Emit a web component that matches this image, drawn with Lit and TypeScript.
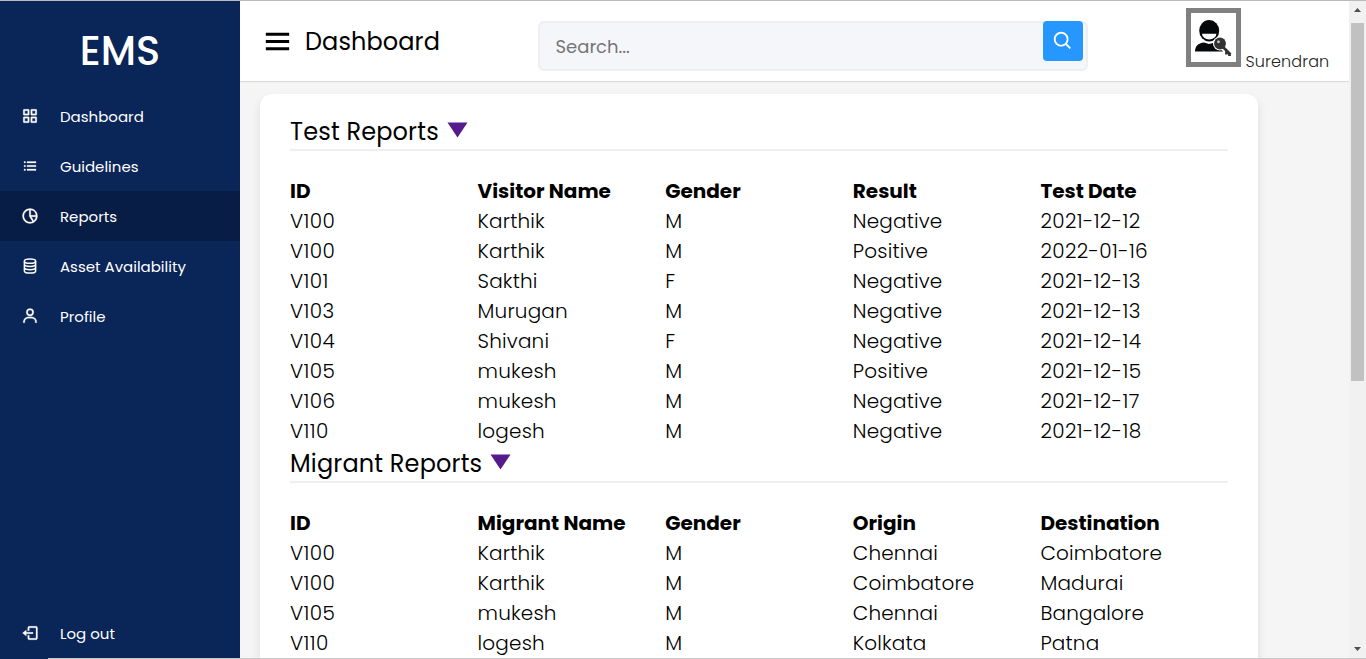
import { LitElement, html, css, svg } from "lit";
import { customElement } from "lit/decorators.js";

const ICONS = {
  grid: svg`<path fill-rule="evenodd" d="M10 3H4a1 1 0 0 0-1 1v6a1 1 0 0 0 1 1h6a1 1 0 0 0 1-1V4a1 1 0 0 0-1-1zM9 9H5V5h4zM20 3h-6a1 1 0 0 0-1 1v6a1 1 0 0 0 1 1h6a1 1 0 0 0 1-1V4a1 1 0 0 0-1-1zm-1 6h-4V5h4zM10 13H4a1 1 0 0 0-1 1v6a1 1 0 0 0 1 1h6a1 1 0 0 0 1-1v-6a1 1 0 0 0-1-1zm-1 6H5v-4h4zM20 13h-6a1 1 0 0 0-1 1v6a1 1 0 0 0 1 1h6a1 1 0 0 0 1-1v-6a1 1 0 0 0-1-1zm-1 6h-4v-4h4z"/>`,
  list: svg`<path d="M4 6h2v2H4zm0 5h2v2H4zm0 5h2v2H4zM8 6h12v2H8zm0 5h12v2H8zm0 5h12v2H8z"/>`,
  pie: svg`<path d="M12 2C6.486 2 2 6.486 2 12s4.486 10 10 10 10-4.486 10-10S17.514 2 12 2zm7.931 9H13V4.069A8.008 8.008 0 0 1 19.931 11zM4 12c0-4.072 3.061-7.436 7-7.931V12a.996.996 0 0 0 .111.438c.015.03.022.063.041.093l4.202 6.723A7.949 7.949 0 0 1 12 20c-4.411 0-8-3.589-8-8zm13.052 6.196L13.805 13h6.126a7.992 7.992 0 0 1-2.879 5.196z"/>`,
  coins: svg`<g fill="none" stroke="currentColor" stroke-width="2"><ellipse cx="12" cy="5.500" rx="7.500" ry="2.800"/><path d="M4.500 5.500v13c0 1.600 3.200 2.800 7.500 2.800s7.500-1.200 7.500-2.800v-13M4.500 9.800c0 1.600 3.200 2.800 7.500 2.800s7.500-1.200 7.500-2.800M4.500 14.100c0 1.600 3.200 2.800 7.500 2.800s7.500-1.200 7.500-2.800"/></g>`,
  user: svg`<path d="M12 2a5 5 0 1 0 5 5 5 5 0 0 0-5-5zm0 8a3 3 0 1 1 3-3 3 3 0 0 1-3 3zm9 11v-1a7 7 0 0 0-7-7h-4a7 7 0 0 0-7 7v1h2v-1a5 5 0 0 1 5-5h4a5 5 0 0 1 5 5v1z"/>`,
  logout: svg`<path d="m2 12 5 4v-3h9v-2H7V8z"/><path d="M20 3h-9c-1.103 0-2 .897-2 2v4h2V5h9v14h-9v-4H9v4c0 1.103.897 2 2 2h9c1.103 0 2-.897 2-2V5c0-1.103-.897-2-2-2z"/>`,
  search: svg`<path d="M10 18a7.952 7.952 0 0 0 4.897-1.688l4.396 4.396 1.414-1.414-4.396-4.396A7.952 7.952 0 0 0 18 10c0-4.411-3.589-8-8-8s-8 3.589-8 8 3.589 8 8 8zm0-14c3.309 0 6 2.691 6 6s-2.691 6-6 6-6-2.691-6-6 2.691-6 6-6z"/>`,
  menu: svg`<path d="M4 6h16v2H4zm0 5h16v2H4zm0 5h16v2H4z"/>`,
};

const icon = (name: keyof typeof ICONS, cls = "icon") =>
  html`<svg class=${cls} viewBox="0 0 24 24" fill="currentColor">${ICONS[name]}</svg>`;

const NAV: [keyof typeof ICONS, string][] = [
  ["grid", "Dashboard"],
  ["list", "Guidelines"],
  ["pie", "Reports"],
  ["coins", "Asset Availability"],
  ["user", "Profile"],
];

const REPORTS = [
  {
    title: "Test Reports",
    head: ["ID", "Visitor Name", "Gender", "Result", "Test Date"],
    rows: [
      ["V100", "Karthik", "M", "Negative", "2021-12-12"],
      ["V100", "Karthik", "M", "Positive", "2022-01-16"],
      ["V101", "Sakthi", "F", "Negative", "2021-12-13"],
      ["V103", "Murugan", "M", "Negative", "2021-12-13"],
      ["V104", "Shivani", "F", "Negative", "2021-12-14"],
      ["V105", "mukesh", "M", "Positive", "2021-12-15"],
      ["V106", "mukesh", "M", "Negative", "2021-12-17"],
      ["V110", "logesh", "M", "Negative", "2021-12-18"],
    ],
  },
  {
    title: "Migrant Reports",
    head: ["ID", "Migrant Name", "Gender", "Origin", "Destination"],
    rows: [
      ["V100", "Karthik", "M", "Chennai", "Coimbatore"],
      ["V100", "Karthik", "M", "Coimbatore", "Madurai"],
      ["V105", "mukesh", "M", "Chennai", "Bangalore"],
      ["V110", "logesh", "M", "Kolkata", "Patna"],
    ],
  },
];

const cell = (text: string) =>
  html`<div class=${/^V?\d/.test(text) ? "num" : "word"}>${text}</div>`;

@customElement("app-root")
class AppRoot extends LitElement {
  static styles = css`
    * { box-sizing: border-box; }
    :host {
      box-sizing: border-box;
      display: flex; flex-direction: column; width: 1366px; height: 659px; overflow: hidden;
      font-family: Poppins, Inter, sans-serif; color: #000; white-space: nowrap;
      border-top: 1px solid #bababa;
    }
    svg { display: block; flex: none; }
    .frame { display: flex; flex: 1; min-height: 0; }
    .edge { flex: none; height: 1px; background: linear-gradient(90deg, #0a2558 48px, #c8c8c8 48px); }
    .side { width: 240px; flex: none; background: #0a2558; color: #fff; display: flex; flex-direction: column; }
    .brand { height: 90px; padding-top: 10px; display: flex; align-items: center; justify-content: center; font-size: 40px; font-weight: 500; line-height: 80px; }
    .nav { display: flex; align-items: center; height: 50px; font-size: 15px; line-height: 48px; flex: none; }
    .nav span { padding-top: 2px; }
    .nav .icon { width: 18px; height: 18px; margin: 0 21px; stroke: currentColor; stroke-width: .35; }
    .nav.on { background: #081d45; }
    .push { flex: 1; }
    .main { flex: 1; min-width: 0; background: #f5f5f5; display: flex; flex-direction: column; }
    .top { height: 80px; flex: none; background: #fff; box-shadow: 0 1px 1px rgba(0,0,0,.1); display: flex; align-items: flex-start; }
    .crumb { display: flex; align-items: center; width: 298px; height: 80px; padding: 1px 0 0 20px; font-size: 24px; letter-spacing: .1px; }
    .burger { width: 35px; height: 35px; margin-right: 10px; }
    .search { margin-top: 20px; width: 550px; height: 50px; border: 2px solid #efeef1; border-radius: 6px; background: #f5f6fa; display: flex; justify-content: space-between; padding-left: 15.500px; font-size: 18px; line-height: 48px; color: #757575; }
    .go { width: 40px; height: 40px; margin: -2px 3px 0 0; border-radius: 4px; background: #2697ff; color: #fff; display: grid; place-items: center; }
    .go .icon { width: 22px; height: 22px; }
    .who { display: flex; margin: 7px 0 0 98px; gap: 4.500px; font-size: 16px; font-weight: 300; line-height: 24px; letter-spacing: .13px; color: #222; }
    .who span { margin-top: 42px; }
    .face { width: 55px; height: 59px; border: 5px solid #808080; background: #fff; }
    .lift { flex: 1; min-height: 0; display: flex; overflow: hidden; }
    .card { width: 998px; height: 700px; flex: none; margin: 13px 0 0 20px; padding: 20px 30px 0; background: #fff; border-radius: 12px; box-shadow: 0 5px 10px rgba(0,0,0,.1); }
    .title { display: flex; align-items: center; gap: 8px; height: 37px; border-bottom: 2px solid #efefef; margin-bottom: 25px; font-size: 24px; line-height: 36px; letter-spacing: .17px; }
    .title svg { width: 21px; height: 16px; margin-top: -4px; }
    .row { display: grid; grid-template-columns: repeat(5, 1fr); height: 30px; font-size: 20px; font-weight: 300; line-height: 30px; }
    .head { font-weight: 700; }
    .num { letter-spacing: .37px; }
    .word { letter-spacing: .17px; }
    .scroll { width: 17px; flex: none; background: #f1f1f1; display: flex; flex-direction: column; align-items: center; padding: 7px 0; }
    .scroll svg { width: 7px; height: 4px; }
    .thumb { width: 13px; height: 358px; background: #c1c1c1; margin: 11px 0 auto; }
  `;

  render() {
    return html`
      <div class="frame">
        <nav class="side">
          <div class="brand">EMS</div>
          ${NAV.map(([i, label]) => html`<div class=${label === "Reports" ? "nav on" : "nav"}>${icon(i)}<span>${label}</span></div>`)}
          <div class="push"></div>
          <div class="nav">${icon("logout")}<span>Log out</span></div>
        </nav>
        <section class="main">
          <header class="top">
            <div class="crumb">${icon("menu", "burger")}<span>Dashboard</span></div>
            <div class="search"><span>Search...</span><div class="go">${icon("search")}</div></div>
            <div class="who">
              <svg class="face" viewBox="0 0 45 49">
                <path d="M4 38.500c0-5 3-8.500 9-9l5 1.500 6-1.500c5 0 8 3 8 9z" fill="#050709"/>
                <ellipse cx="18.200" cy="17.700" rx="10" ry="10.700" fill="#050709"/>
                <path d="M11 20.800h14.400a7.200 5.700 0 0 1-14.400 0z" fill="#fff"/>
                <path d="m31 34 8 8" stroke="#fff" stroke-width="5"/>
                <circle cx="29" cy="30.500" r="7" fill="#fff"/>
                <path d="m31 33 8.500 8.500m-4-4v4m3-1.500v3" stroke="#333" stroke-width="2.800" fill="none"/>
                <circle cx="29" cy="30.500" r="5.900" fill="#333"/>
                <circle cx="27.500" cy="28.800" r="1.400" fill="#ccc"/>
              </svg>
              <span>Surendran</span>
            </div>
          </header>
          <div class="lift">
            <div class="card">
              ${REPORTS.map((r) => html`
                <div class="title"><span>${r.title}</span><svg viewBox="0 0 21 16"><path d="M.5 .5h20L10.500 15.500z" fill="#551a8b"/></svg></div>
                <div class="row head">${r.head.map((c) => html`<div>${c}</div>`)}</div>
                ${r.rows.map((row) => html`<div class="row">${row.map(cell)}</div>`)}
              `)}
            </div>
          </div>
        </section>
        <div class="scroll">
          <svg viewBox="0 0 7 4"><path d="M0 4 3.500 0 7 4z" fill="#505050"/></svg>
          <div class="thumb"></div>
          <svg viewBox="0 0 7 4"><path d="M0 0l3.500 4L7 0z" fill="#505050"/></svg>
        </div>
      </div>
      <div class="edge"></div>
    `;
  }
}
